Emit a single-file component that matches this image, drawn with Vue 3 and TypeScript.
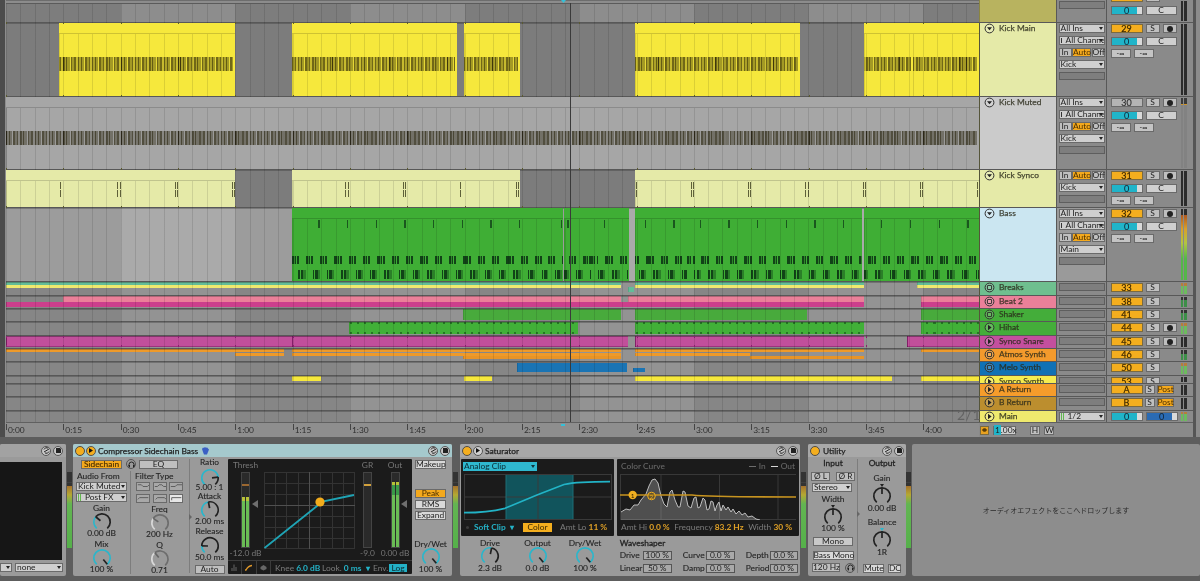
<script setup lang="ts">
import { h } from 'vue'

interface Clip { from: number; to: number; color?: string; y?: number; h?: number; kind?: string; title?: boolean }
interface Track {
  h: number
  name?: string
  color: string
  icon?: 'fold' | 'group' | 'play'
  lane?: string
  clips?: Clip[]
  io?: 'full' | 'short' | 'none' | 'main'
  input?: string
  num?: string
  numOff?: boolean
  rec?: boolean
  mix?: 'full' | 'short' | 'ret' | 'main' | 'top'
  meter?: string
  tall?: boolean
}

const YEL = '#f6e83c'
const PALE = '#e5eaa8'
const GRN = '#3fae35'
const MUT = '#a6a6a6'
const TEAL = '#63bd98'
const LEMON = '#efe96e'
const PINK = '#ea8099'
const MAG = '#cc3f8c'
const SHK = '#48aa3c'
const SNR = '#c14f9b'
const ORG = '#ee9a2a'
const BLU = '#1a74b4'

const strips = (ranges: number[][], color: string, y: number, hh: number, kind?: string): Clip[] =>
  ranges.map(([from, to]) => ({ from, to, color, y, h: hh, kind }))

const tracks: Track[] = [
  { h: 22, color: '#b8b35f', mix: 'top', meter: 'dark', io: 'none' },
  {
    h: 74, name: 'Kick Main', color: PALE, icon: 'fold', lane: 'dim', io: 'full', input: 'Kick', num: '29', rec: true, mix: 'full', meter: 'dark',
    clips: [[59, 235], [292, 457], [464, 520], [635, 799.5], [864, 913], [913, 979]].map(([from, to]) => ({ from, to, color: YEL, kind: 'kick', title: true })),
  },
  {
    h: 73, name: 'Kick Muted', color: '#cbcbcb', icon: 'fold', lane: 'dim', io: 'full', input: 'Kick', num: '30', numOff: true, rec: true, mix: 'full', meter: 'muted',
    clips: [{ from: 6, to: 979, color: MUT, kind: 'kickm', title: true }],
  },
  {
    h: 38, name: 'Kick Synco', color: PALE, icon: 'fold', lane: 'dim', io: 'short', input: 'Kick', num: '31', rec: true, mix: 'full', meter: 'dark',
    clips: [[6, 235], [292, 520], [635, 979]].map(([from, to]) => ({ from, to, color: PALE, kind: 'synco', title: true })),
  },
  {
    h: 74, name: 'Bass', color: '#cbe6f1', icon: 'fold', lane: 'light', io: 'full', input: 'Main', num: '32', rec: true, mix: 'full', meter: 'hot', tall: true,
    clips: [[292, 563], [564, 629], [635, 862], [864, 979]].map(([from, to]) => ({ from, to, color: GRN, kind: 'bass', title: true })),
  },
  {
    h: 14, name: 'Breaks', color: '#6fbf8f', icon: 'group', num: '33', io: 'none', mix: 'short', meter: 'mini',
    clips: [...strips([[6, 621], [635, 864], [917, 979]], TEAL, 1, 4), ...strips([[6, 621], [635, 864], [917, 979]], LEMON, 4, 3), ...strips([[628, 634]], TEAL, 6, 5)],
  },
  {
    h: 13, name: 'Beat 2', color: PINK, icon: 'group', num: '38', io: 'none', mix: 'short', meter: 'minidark',
    clips: [...strips([[63, 621], [628, 864], [921, 979]], PINK, 1, 6), ...strips([[6, 864], [921, 979]], MAG, 7, 5)],
  },
  {
    h: 13, name: 'Shaker', color: '#44ad3a', icon: 'group', num: '41', io: 'none', mix: 'short', meter: 'minidark',
    clips: strips([[463, 621], [635, 807], [921, 979]], SHK, 1, 11),
  },
  {
    h: 14, name: 'Hihat', color: '#44ad3a', icon: 'play', num: '44', io: 'none', rec: true, mix: 'short', meter: 'mini',
    clips: strips([[349, 578], [635, 864], [921, 979]], '#41b038', 1, 12, 'hihat'),
  },
  {
    h: 13, name: 'Synco Snare', color: '#c44f9e', icon: 'play', num: '45', io: 'none', rec: true, mix: 'short', meter: 'dark',
    clips: strips([[6, 292], [292, 628], [635, 864], [907, 979]], SNR, 1, 11, 'edge'),
  },
  {
    h: 13, name: 'Atmos Synth', color: '#f39a2c', icon: 'group', num: '46', io: 'none', mix: 'short', meter: 'minidark',
    clips: [
      ...strips([[6, 284], [292, 621], [635, 864], [921, 979]], ORG, 1, 3),
      ...strips([[235, 284], [292, 621], [635, 750]], ORG, 5, 3),
      ...strips([[463, 621], [750, 864]], '#e89426', 8, 3),
    ],
  },
  {
    h: 14, name: 'Melo Synth', color: '#1071b5', icon: 'group', num: '50', io: 'none', mix: 'short', meter: 'mini',
    clips: [...strips([[517, 627]], BLU, 2, 5), ...strips([[517, 627], [633, 645]], BLU, 7, 4)],
  },
  {
    h: 8, name: 'Synco Synth', color: '#f5ec50', icon: 'play', num: '53', io: 'none', mix: 'short', meter: 'dark',
    clips: strips([[292, 321], [464, 492], [635, 892], [921, 979]], YEL, 1, 5),
  },
  { h: 13, name: 'A Return', color: '#f59c2b', icon: 'play', num: 'A', io: 'none', mix: 'ret', meter: 'dark' },
  { h: 14, name: 'B Return', color: '#bc8e2e', icon: 'play', num: 'B', io: 'none', mix: 'ret', meter: 'dark' },
  { h: 12, name: 'Main', color: LEMON, icon: 'play', io: 'main', mix: 'main', meter: 'mini' },
]

const noteLanes: Record<string, string[]> = {
  kick: ['n-kick n-a', 'n-kick n-b'],
  kickm: ['n-kick n-a', 'n-kick n-b'],
  synco: ['n-syn n-a', 'n-syn n-b'],
  bass: ['n-bass n-a', 'n-bass n-b', 'n-bass n-c'],
  hihat: ['n-hat n-a', 'n-hat n-b'],
}

const clipStyle = (c: Clip) => ({
  left: `${c.from - 6}px`,
  width: `${c.to - c.from}px`,
  top: c.y !== undefined ? `${c.y - 1}px` : '0',
  height: c.h !== undefined ? `${c.h}px` : '100%',
  background: c.color,
  '--ox': `${6 - c.from}px`,
})

const times = ['0:00', '0:15', '0:30', '0:45', '1:00', '1:15', '1:30', '1:45', '2:00', '2:15', '2:30', '2:45', '3:00', '3:15', '3:30', '3:45', '4:00']

// angle 0 is straight up, clockwise
const pt = (c: number, r: number, a: number) => {
  const t = (a * Math.PI) / 180
  return `${(c + r * Math.sin(t)).toFixed(2)} ${(c - r * Math.cos(t)).toFixed(2)}`
}
const arc = (c: number, r: number, a0: number, a1: number) =>
  `M${pt(c, r, a0)}A${r} ${r} 0 ${a1 - a0 > 180 ? 1 : 0} 1 ${pt(c, r, a1)}`

const Knob = (props: { v: number; mode?: string }) => {
  const c = 10
  const r = 8.2
  const a = -140 + props.v * 280
  const mode = props.mode ?? 'cyan'
  const on = mode === 'white' ? '#d8d8d8' : '#2ab6cb'
  const off = mode === 'white' ? '#6d6d6d' : '#222'
  const parts = []
  if (mode !== 'uni') {
    if (props.v > 0) parts.push(h('path', { d: arc(c, r, -140, a), stroke: on, 'stroke-width': 1.7, fill: 'none' }))
    if (props.v < 1) parts.push(h('path', { d: arc(c, r, a, 140), stroke: off, 'stroke-width': 1.7, fill: 'none' }))
  } else {
    parts.push(h('path', { d: arc(c, r, -140, 140), stroke: '#222', 'stroke-width': 1.7, fill: 'none' }))
  }
  parts.push(h('path', { d: `M${pt(c, 2, a)}L${pt(c, r, a)}`, stroke: mode === 'white' ? '#666' : '#222', 'stroke-width': 1.7 }))
  return h('svg', { class: 'knob', width: 20, height: 20, viewBox: '0 0 20 20' }, parts)
}
Knob.props = ['v', 'mode']

const filterIcons = ['M1 2H5L7 4H12L14 2', 'M1 4H4L6 2H9L11 4H14', 'M1 4H6L8 2H14', 'M1 5L3 3H13', 'M2 5L4 3H12L14 5', 'M2 6V3H13']

const spectrum =
  'M1 38 L6 35 L10 36 L14 31 L18 31 L21 26 L26 20 L29 12 L32 6 L35 5 L38 9 L41 22 L44 30 L47 33 L50 18 L52 16 L55 26 L58 33 L60 33 L63 17 L65 18 L68 32 L71 34 L74 24 L76 23 L78 34 L80 33 L83 24 L85 26 L87 36 L89 35 L91 27 L93 28 L95 37 L97 31 L99 28 L101 37 L103 31 L106 36 L108 33 L111 38 L113 35 L116 40 L119 37 L122 41 L125 39 L128 43 L132 42 L136 45 L140 46'
</script>

<template>
  <div class="live">
    <section class="arr">
      <div class="tracks">
        <div v-for="(t, i) in tracks" :key="i" class="track" :style="{ height: t.h + 'px' }">
          <div class="lane" :class="`lane--${t.lane ?? 'bands'}`">
            <div v-for="(c, j) in t.clips" :key="j" class="clip" :class="c.kind" :style="clipStyle(c)">
              <div v-if="c.title" class="clip__title" :style="{ background: c.color }"></div>
              <i v-for="n in noteLanes[c.kind ?? ''] ?? []" :key="n" :class="n"></i>
            </div>
          </div>
          <div class="head">
            <div class="name" :style="{ background: t.color }">
              <svg v-if="t.icon" class="ticon" width="11" height="11" viewBox="0 0 11 11">
                <circle cx="5.5" cy="5.5" r="4.4" fill="rgba(255,255,255,.18)" stroke="#2f2f2f" stroke-width="1" />
                <path v-if="t.icon === 'fold'" d="M3 4.2H8L5.5 7.2Z" fill="#222" />
                <path v-else-if="t.icon === 'play'" d="M4 2.8L7.6 5.5L4 8.2Z" fill="#222" />
                <rect v-else x="3.4" y="3.4" width="4.2" height="4.2" rx=".6" fill="none" stroke="#2f2f2f" />
              </svg>
              <span v-if="t.name" class="name__txt">{{ t.name }}</span>
            </div>

            <div class="io" :class="{ 'io--tall': t.tall }">
              <template v-if="t.io === 'full'">
                <div class="dd">All Ins</div>
                <div class="dd dd--ch">All Channels</div>
              </template>
              <div v-if="t.io === 'full' || t.io === 'short'" class="iab">
                <span class="b">In</span><span class="b b--on">Auto</span><span class="b">Off</span>
              </div>
              <div v-if="t.io === 'full' || t.io === 'short'" class="dd">{{ t.input }}</div>
              <div v-if="t.io !== 'main'" class="blank"></div>
              <div v-else class="dd dd--main"><em></em>1/2</div>
            </div>

            <div class="mix" :class="{ 'io--tall': t.tall }">
              <div class="mix__col">
                <template v-if="t.mix === 'top'">
                  <div class="mrow mrow--cut"><span class="num"></span><span class="b s"></span></div>
                  <div class="mrow"><span class="vol">0</span><span class="pan">C</span></div>
                </template>
                <template v-else-if="t.mix === 'main'">
                  <div class="mrow"><span class="vol">0</span><span class="vol vol--blue">0</span></div>
                </template>
                <template v-else>
                  <div class="mrow">
                    <span class="num" :class="{ 'num--off': t.numOff }">{{ t.num }}</span>
                    <span class="b s" :class="{ 's--ret': t.mix === 'ret' }">S</span>
                    <span v-if="t.mix === 'ret'" class="b b--on post">Post</span>
                    <span v-else-if="t.rec" class="b s rec"><u></u></span>
                  </div>
                  <template v-if="t.mix === 'full'">
                    <div class="mrow"><span class="vol">0</span><span class="pan">C</span></div>
                    <div class="mrow mrow--inf"><span class="b inf">-∞</span><span class="b inf">-∞</span></div>
                  </template>
                </template>
              </div>
              <div class="meter" :class="`meter--${t.meter}`"><b></b><b></b></div>
            </div>
          </div>
        </div>
      </div>

      <div class="ruler">
        <div class="ruler__time">
          <span v-for="m in times" :key="m" class="tick">{{ m }}</span>
        </div>
        <div class="ruler__head">
          <span class="gear"><svg width="8" height="8" viewBox="0 0 8 8"><path d="M1 4L3 2H5L7 4L5 6H3Z" fill="#5b3c05" /></svg></span>
          <span class="speed"><b>1</b>.00x</span>
          <span class="b hw">H</span><span class="b hw">W</span>
        </div>
      </div>

      <div class="gridlines"></div>
      <div class="barticks"></div>
      <div class="playhead"></div>
      <i class="loc loc--top"></i>
      <i class="loc loc--ruler"></i>
      <span class="sig">2/1</span>
    </section>

    <section class="rack">
      <div class="dev dev--cut">
        <div class="dev__bar dev__bar--end">
          <span class="round"><svg width="7" height="7" viewBox="0 0 7 7"><path d="M1 5L6 2M1 2.5A3 3 0 0 1 5 1M6 4.5A3 3 0 0 1 2 6" stroke="#222" fill="none" /></svg></span>
          <span class="round"><svg width="7" height="7" viewBox="0 0 7 7"><path d="M1 1H5L6 2V6H1Z" fill="#222" /></svg></span>
        </div>
        <div class="cut__screen"></div>
        <div class="cut__row"><span class="dd dd--stub"></span><span class="dd dd--none">none</span></div>
      </div>
      <div class="slot"><div class="rmeter"></div></div>

      <div class="dev dev--comp">
        <div class="dev__bar dev__bar--cyan">
          <span class="power"></span>
          <span class="round round--y"><svg width="7" height="7" viewBox="0 0 7 7"><path d="M2 1L6 3.5L2 6Z" fill="#111" /></svg></span>
          <span class="dev__title">Compressor Sidechain Bass</span>
          <svg class="hand" width="9" height="9" viewBox="0 0 9 9"><path d="M1 3L2 1.5L3 2L4 .8L5 2L6 1.2L7 2.5L8 3.5L7 6L6 8.5H3L2 6Z" fill="#3a5fc4" /></svg>
          <span class="dev__spacer"></span>
          <span class="round"><svg width="7" height="7" viewBox="0 0 7 7"><path d="M1 5L6 2M1 2.5A3 3 0 0 1 5 1M6 4.5A3 3 0 0 1 2 6" stroke="#222" fill="none" /></svg></span>
          <span class="round"><svg width="7" height="7" viewBox="0 0 7 7"><path d="M1 1H5L6 2V6H1Z" fill="#222" /></svg></span>
        </div>
        <div class="comp">
          <div class="sc">
            <div class="sc__top">
              <span class="b b--on sc__btn">Sidechain</span>
              <span class="round round--head"><svg width="7" height="7" viewBox="0 0 7 7"><path d="M1 5V3.5A2.5 2.5 0 0 1 6 3.5V5" stroke="#222" fill="none" /><rect x=".6" y="4" width="1.4" height="2.4" fill="#222" /><rect x="5" y="4" width="1.4" height="2.4" fill="#222" /></svg></span>
              <span class="b sc__eq">EQ</span>
            </div>
            <div class="sc__cols">
              <div class="col col--audio">
                <span class="lbl lbl--start">Audio From</span>
                <div class="dd dd--dev">Kick Muted</div>
                <div class="dd dd--dev dd--main"><em></em>Post FX</div>
                <span class="lbl lbl--knob">Gain</span>
                <Knob :v="0.32" />
                <span class="val">0.00 dB</span>
                <span class="lbl lbl--knob">Mix</span>
                <Knob :v="1" />
                <span class="val">100 %</span>
              </div>
              <div class="col col--filter">
                <span class="lbl lbl--start">Filter Type</span>
                <div class="filters">
                  <span v-for="(d, k) in filterIcons" :key="k" class="fbtn" :class="{ 'fbtn--on': k === 5 }">
                    <svg width="15" height="7" viewBox="0 0 15 8"><path :d="d" stroke="#555" fill="none" /></svg>
                  </span>
                </div>
                <span class="lbl lbl--knob">Freq</span>
                <Knob :v="0.3" mode="white" />
                <span class="val">200 Hz</span>
                <span class="lbl lbl--knob">Q</span>
                <Knob :v="0.36" mode="white" />
                <span class="val">0.71</span>
              </div>
            </div>
          </div>
          <div class="divider"><i></i></div>
          <div class="col col--env">
            <span class="lbl">Ratio</span>
            <Knob :v="0.8" />
            <span class="val">5.00 : 1</span>
            <span class="lbl">Attack</span>
            <Knob :v="0.46" />
            <span class="val">2.00 ms</span>
            <span class="lbl">Release</span>
            <Knob :v="0.18" />
            <span class="val">50.0 ms</span>
            <span class="b env__auto">Auto</span>
          </div>
          <div class="graph">
            <div class="graph__main">
              <div class="gcol gcol--thresh">
                <span class="glbl">Thresh</span>
                <div class="gmeter"><b class="bar"></b><b class="bar"></b><u class="peak"></u></div>
                <span class="glbl glbl--v">-12.0 dB</span>
                <i class="garrow"></i>
              </div>
              <svg class="gplot" width="91" height="77" viewBox="0 0 91 77">
                <path d="M0 .5H91M0 11.5H91M0 22.5H91M0 33.5H91M0 44.5H91M0 55.5H91M0 66.5H91M0 76.5H91M.5 0V77M11.5 0V77M22.5 0V77M34.5 0V77M45.5 0V77M56.5 0V77M68.5 0V77M79.5 0V77M90.5 0V77" stroke="#333" />
                <path d="M45.5 0V77M0 33.5H91" stroke="#505050" />
                <path d="M.5 76L53 34L56 30L90 23" stroke="#1fa3b4" stroke-width="1.8" fill="none" />
                <circle cx="56" cy="30" r="4.6" fill="#f2ac1c" />
              </svg>
              <div class="gcol gcol--gr">
                <span class="glbl">GR</span>
                <div class="gmeter"><u class="peak peak--gr"></u></div>
                <span class="glbl glbl--v">-9.0</span>
              </div>
              <div class="gcol gcol--out">
                <span class="glbl">Out</span>
                <div class="gmeter gmeter--out"><b class="bar"></b><b class="bar"></b></div>
                <span class="glbl glbl--v">0.00 dB</span>
                <i class="garrow garrow--out"></i>
              </div>
            </div>
            <div class="graph__foot">
              <span class="gcell"><svg width="7" height="7" viewBox="0 0 7 7"><path d="M3 .5V7M1 7V4M5 7V3" stroke="#666" /></svg></span>
              <span class="gcell"><svg width="7" height="7" viewBox="0 0 7 7"><path d="M0 6H1Q3 2 7 1.5" stroke="#e0982a" fill="none" stroke-width="1.3" /></svg></span>
              <span class="gcell"><svg width="7" height="7" viewBox="0 0 7 7"><path d="M.5 3L3.5 1L6.5 3V5L3.5 6.5L.5 5Z" fill="#666" /></svg></span>
              <span class="ft ft--knee">Knee <b>6.0 dB</b></span>
              <span class="ft ft--look">Look. <b>0 ms</b> <b class="ft__tri">▾</b></span>
              <span class="ft ft--env">Env.</span>
              <span class="logbtn">Log</span>
            </div>
          </div>
          <div class="col col--mk">
            <span class="b b--lit mk__up">Makeup</span>
            <span class="b b--on mk__b mk__peak">Peak</span>
            <span class="b b--lit mk__b">RMS</span>
            <span class="b b--lit mk__b">Expand</span>
            <span class="lbl mk__dw">Dry/Wet</span>
            <Knob :v="1" />
            <span class="val">100 %</span>
          </div>
        </div>
      </div>
      <div class="slot slot--comp"><div class="rmeter"></div></div>

      <div class="dev dev--sat">
        <div class="dev__bar">
          <span class="power"></span>
          <span class="round round--l"><svg width="7" height="7" viewBox="0 0 7 7"><path d="M2 1L6 3.5L2 6Z" fill="#111" /></svg></span>
          <span class="dev__title">Saturator</span>
          <span class="dev__spacer"></span>
          <span class="round"><svg width="7" height="7" viewBox="0 0 7 7"><path d="M1 5L6 2M1 2.5A3 3 0 0 1 5 1M6 4.5A3 3 0 0 1 2 6" stroke="#222" fill="none" /></svg></span>
          <span class="round"><svg width="7" height="7" viewBox="0 0 7 7"><path d="M1 1H5L6 2V6H1Z" fill="#222" /></svg></span>
        </div>
        <div class="sat__top">
          <div class="scr scr--clip">
            <div class="analog">Analog Clip</div>
            <svg class="plot" width="148" height="46" viewBox="0 0 148 46">
              <rect x="42" width="67" height="46" fill="#11545c" />
              <path d="M0 23H148M74 0V46" stroke="#3a3a3a" />
              <path d="M42 0V46M109 0V46" stroke="#1f6e76" />
              <rect x=".5" y=".5" width="147" height="45" fill="none" stroke="#3a3a3a" />
              <path d="M0 38.7C18 38.7 30 37 41 34.3L73 21L100 10.5C112 8 128 7.7 146 7.7" stroke="#22b3c6" stroke-width="1.7" fill="none" />
            </svg>
            <div class="scr__foot">
              <i class="led"></i>
              <span class="ft ft--cy"><b>Soft Clip</b> <b class="ft__tri">▾</b></span>
              <span class="colorbtn">Color</span>
              <span class="ft">Amt Lo <b class="gold">11 %</b></span>
            </div>
          </div>
          <div class="scr scr--curve">
            <div class="curve__head">
              <span class="ft">Color Curve</span>
              <span class="dev__spacer"></span>
              <span class="ft"><s class="dash"></s>In</span>
              <span class="ft ft--out"><s class="dash dash--w"></s>Out</span>
            </div>
            <svg class="plot" width="176" height="46" viewBox="0 0 176 46">
              <path d="M0 .5H176M0 45.5H176M.5 0V46M41 0V46M99.5 0V46M158 0V46" stroke="#383838" />
              <path :d="spectrum + ' L1 46Z'" fill="rgba(190,190,190,.32)" />
              <path :d="spectrum" stroke="#bdbdbd" stroke-width="1" fill="none" />
              <path d="M0 21H72Q90 23 176 23" stroke="#c79420" stroke-width="1.7" fill="none" />
              <circle cx="12.7" cy="21" r="4.2" fill="#efae20" />
              <text x="12.7" y="23.5" class="pin">1</text>
              <circle cx="31.5" cy="22" r="3.8" fill="rgba(120,90,20,.5)" stroke="#efae20" />
              <text x="31.5" y="24.5" class="pin pin--y">2</text>
            </svg>
            <div class="scr__foot scr__foot--curve">
              <span class="ft">Amt Hi <b class="gold">0.0 %</b></span>
              <span class="ft">Frequency <b class="gold">83.2 Hz</b></span>
              <span class="ft">Width <b class="gold">30 %</b></span>
            </div>
          </div>
        </div>
        <div class="sat__low">
          <div class="col col--k"><span class="lbl">Drive</span><Knob :v="0.54" /><span class="val">2.3 dB</span></div>
          <div class="col col--k"><span class="lbl">Output</span><Knob :v="1" /><span class="val">0.0 dB</span></div>
          <div class="col col--k"><span class="lbl">Dry/Wet</span><Knob :v="1" /><span class="val">100 %</span></div>
          <div class="wave">
            <span class="lbl wave__t">Waveshaper</span>
            <div class="wave__grid">
              <span class="lbl">Drive</span><span class="field field--a">100 %</span>
              <span class="lbl">Curve</span><span class="field">0.0 %</span>
              <span class="lbl">Depth</span><span class="field">0.0 %</span>
              <span class="lbl">Linear</span><span class="field field--a">50 %</span>
              <span class="lbl">Damp</span><span class="field">0.0 %</span>
              <span class="lbl">Period</span><span class="field">0.0 %</span>
            </div>
          </div>
        </div>
      </div>
      <div class="slot slot--sat"><div class="rmeter"></div></div>

      <div class="dev dev--util">
        <div class="dev__bar">
          <span class="power"></span>
          <span class="dev__title dev__title--u">Utility</span>
          <span class="dev__spacer"></span>
          <span class="round"><svg width="7" height="7" viewBox="0 0 7 7"><path d="M1 5L6 2M1 2.5A3 3 0 0 1 5 1M6 4.5A3 3 0 0 1 2 6" stroke="#222" fill="none" /></svg></span>
          <span class="round"><svg width="7" height="7" viewBox="0 0 7 7"><path d="M1 1H5L6 2V6H1Z" fill="#222" /></svg></span>
        </div>
        <div class="util">
          <div class="col col--in">
            <span class="lbl lbl--b">Input</span>
            <div class="urow"><span class="b u__ph">Ø L</span><span class="b u__ph">Ø R</span></div>
            <div class="dd dd--stereo">Stereo</div>
            <span class="lbl u__w">Width</span>
            <div class="uk"><Knob :v="0.5" mode="uni" /></div>
            <span class="val">100 %</span>
            <span class="b u__mono">Mono</span>
            <span class="b b--lit u__bm">Bass Mono</span>
            <div class="urow u__hz"><span class="b u__120">120 Hz</span><span class="round round--head"><svg width="7" height="7" viewBox="0 0 7 7"><path d="M1 5V3.5A2.5 2.5 0 0 1 6 3.5V5" stroke="#222" fill="none" /><rect x=".6" y="4" width="1.4" height="2.4" fill="#222" /><rect x="5" y="4" width="1.4" height="2.4" fill="#222" /></svg></span></div>
          </div>
          <div class="divider divider--u"><i></i></div>
          <div class="col col--out">
            <span class="lbl lbl--b">Output</span>
            <span class="lbl u__g">Gain</span>
            <div class="uk"><Knob :v="0.5" mode="uni" /></div>
            <span class="val u__v">0.00 dB</span>
            <span class="lbl u__bal">Balance</span>
            <div class="uk uk--c"><Knob :v="0.5" mode="uni" /></div>
            <span class="val u__v">1R</span>
            <div class="urow u__mute"><span class="b b--lit">Mute</span><span class="b b--lit u__dc">DC</span></div>
          </div>
        </div>
      </div>
      <div class="slot slot--util"><div class="rmeter"></div></div>

      <div class="drop">オーディオエフェクトをここへドロップします</div>
    </section>
  </div>
</template>

<style scoped>
.live {
  width: 1200px;
  height: 581px;
  overflow: hidden;
  background: #5d5d5d;
  font-family: Lato, "Noto Sans CJK JP", sans-serif;
  font-size: 8.4px;
  color: #222;
  filter: blur(0.4px);
}

/* Arrangement */
.arr {
  position: relative;
  height: 437px;
  padding-left: 6px;
  width: 1187px;
  background: #8d8d8d;
  box-shadow: inset 5px 0 0 #4c4c4c, 3px 0 0 #555, 7px 0 0 #8b8b8b;
}
.track { display: flex; box-sizing: border-box; border-top: 1px solid #585858; }
.track:first-child { border-top: 0; }
.lane {
  position: relative;
  width: 973px;
  flex-shrink: 0;
  overflow: hidden;
}
.lane--bands { background: repeating-linear-gradient(90deg, #868686 0 114.67px, #939393 114.67px 229.33px); }
.lane--dim { background: #7c7c7c; }
.lane--light { background: repeating-linear-gradient(90deg, #9c9c9c 0 114.67px, #aaaaaa 114.67px 229.33px); }
.track:first-child .lane { background: linear-gradient(#8c8c8c 0 3px, #5b5b5b 3px 4px, transparent 4px), repeating-linear-gradient(90deg, #7d7d7d 0 114.67px, #8d8d8d 114.67px 229.33px); }
.lane::after { content: ''; position: absolute; left: 0; right: 0; top: 0; height: 1px; background: rgba(40,40,40,.3); }

.clip { position: absolute; overflow: hidden; box-shadow: inset 1px 0 0 rgba(0,0,0,.12); }
.clip__title {
  position: absolute;
  left: 0;
  right: 0;
  top: 0;
  height: 10px;
  z-index: 2;
  border-bottom: 1px solid rgba(0,0,0,.16);
}
.edge { box-shadow: inset 1px 0 0 rgba(90,0,70,.6), inset 0 1px 0 rgba(90,0,70,.25), inset 0 -1px 0 rgba(90,0,70,.35); }

.n-kick, .n-syn, .n-bass, .n-hat { position: absolute; left: 0; right: 0; display: block; }
.n-kick {
  height: 6.5px;
  right: 2px;
  background-image:
    repeating-linear-gradient(90deg, rgba(20,15,0,.55) 0 1px, transparent 1px 57.33px),
    repeating-linear-gradient(90deg,
      rgba(30,25,0,.62) 0 1.5px, rgba(30,25,0,.34) 1.5px 3px, rgba(30,25,0,.68) 3px 4px, rgba(30,25,0,.38) 4px 6.4px,
      rgba(30,25,0,.08) 6.4px 7.2px, rgba(30,25,0,.62) 7.2px 9px, rgba(30,25,0,.38) 9px 11px, rgba(30,25,0,.62) 11px 12.5px, rgba(30,25,0,.22) 12.5px 14.33px);
  background-position: var(--ox) 0;
}
.kick .n-a, .kickm .n-a { top: 34px; }
.kick .n-b, .kickm .n-b { top: 41px; }
.n-syn {
  height: 7px;
  background-image: repeating-linear-gradient(90deg, transparent 0 54px, rgba(50,50,20,.75) 54px 55px, transparent 55px 56.5px, rgba(50,50,20,.75) 56.5px 57.33px);
  background-position: var(--ox) 0;
}
.synco .n-a { top: 12px; }
.synco .n-b { top: 20px; }
.n-bass { background-position: var(--ox) 0; }
.bass .n-a {
  top: 12px;
  height: 8px;
  background-image: repeating-linear-gradient(90deg, transparent 0 12.6px, rgba(10,50,20,.7) 12.6px 14px, transparent 14px 28.67px);
}
.bass .n-b {
  top: 48px;
  height: 8px;
  background-image: repeating-linear-gradient(90deg,
    rgba(5,40,15,.8) 0 2.5px, rgba(5,40,15,.3) 2.5px 3.2px, rgba(5,40,15,.8) 3.2px 4.5px, transparent 4.5px 5.5px, rgba(5,40,15,.8) 5.5px 7.5px, transparent 7.5px 14.33px);
}
.bass .n-c {
  top: 62px;
  height: 9px;
  background-image: repeating-linear-gradient(90deg,
    transparent 0 7px, rgba(5,40,15,.8) 7px 8.5px, transparent 8.5px 9.5px, rgba(5,40,15,.8) 9.5px 12px, rgba(5,40,15,.35) 12px 14.33px);
}
.n-hat {
  height: 2px;
  background-image: repeating-linear-gradient(90deg, rgba(10,60,15,.5) 0 2px, transparent 2px 7.17px);
  background-position: var(--ox) 0;
}
.hihat .n-a { top: 0; }
.hihat .n-b { bottom: 0; }

.gridlines, .barticks {
  position: absolute;
  left: 6px;
  width: 973px;
  top: 4px;
  height: 418px;
  pointer-events: none;
}
.gridlines {
  z-index: 1;
  background: repeating-linear-gradient(90deg, rgba(0,0,0,.11) 0 1px, transparent 1px 14.33px);
}
.barticks {
  z-index: 3;
  background:
    repeating-linear-gradient(90deg, #5a5a30 0 1px, transparent 1px 57.33px) 0 18px / 100% 2px no-repeat,
    repeating-linear-gradient(90deg, #5a5a30 0 1px, transparent 1px 57.33px) 0 91px / 100% 2px no-repeat,
    repeating-linear-gradient(90deg, #5a5a30 0 1px, transparent 1px 57.33px) 0 164px / 100% 2px no-repeat,
    repeating-linear-gradient(90deg, #5a5a30 0 1px, transparent 1px 57.33px) 0 202px / 100% 2px no-repeat,
    repeating-linear-gradient(90deg, #8a2070 0 1px, transparent 1px 57.33px) 0 332px / 100% 2px no-repeat,
    repeating-linear-gradient(90deg, #8a2070 0 1px, transparent 1px 57.33px) 0 341px / 100% 2px no-repeat;
}
.playhead {
  position: absolute;
  left: 570px;
  top: 3px;
  width: 1.4px;
  height: 419px;
  background: #3a3a3a;
  z-index: 4;
}
.loc { position: absolute; width: 5px; height: 3px; background: #35c0d8; z-index: 4; display: block; }
.loc--top { left: 561px; top: 0; clip-path: polygon(0 0, 100% 0, 50% 100%); }
.loc--ruler { left: 561px; top: 424px; height: 2px; width: 4px; }
.sig {
  position: absolute;
  left: 957px;
  top: 408px;
  font-size: 14px;
  line-height: 14px;
  color: #636363;
  letter-spacing: .5px;
  z-index: 4;
}

/* Track heads */
.head {
  display: flex;
  flex: 1;
  min-width: 0;
  border-left: 1px solid #55553a;
}
.track:first-child .head { border-left-color: #8a8540; }
.name {
  width: 76px;
  flex-shrink: 0;
  display: flex;
  align-items: flex-start;
  overflow: hidden;
  border-right: 1px solid #585858;
}
.ticon { margin: 0 0 0 4px; flex-shrink: 0; }
.name__txt {
  margin: 0 0 0 4px;
  line-height: 11px;
  font-size: 8.4px;
  color: #2a2a1a;
  white-space: nowrap;
  -webkit-text-stroke: .25px #2a2a1a;
  opacity: .85;
}
.io {
  width: 50px;
  flex-shrink: 0;
  padding: 1px 1.5px 0;
  box-sizing: border-box;
  background: #8a8a8a;
  border-right: 1px solid #585858;
  display: flex;
  flex-direction: column;
  gap: 3px;
  overflow: hidden;
}
.io--tall { background: #9a9a9a; }
.dd {
  height: 9px;
  line-height: 7px;
  background: #cfcfcf;
  border: 1px solid #6a6a6a;
  box-sizing: border-box;
  padding: 0 8px 0 1px;
  position: relative;
  white-space: nowrap;
  overflow: hidden;
  flex-shrink: 0;
  font-size: 8.4px;
}
.dd::after {
  content: '';
  position: absolute;
  right: 1px;
  top: 2px;
  border: 2.5px solid transparent;
  border-top: 3.5px solid #222;
  border-bottom: 0;
}
.dd--ch { padding-left: 6px; }
.dd--ch::before { content: ''; position: absolute; left: 1px; top: 1px; width: 1px; height: 5px; background: #333; }
.dd--main { padding-left: 8px; }
.dd em { position: absolute; left: 1px; top: 0; width: 3.5px; height: 7px; background: repeating-linear-gradient(90deg, #61b84e 0 1.2px, transparent 1.2px 2.2px); }
.iab { display: flex; justify-content: space-between; flex-shrink: 0; }
.iab .b { width: 13px; }
.iab .b--on { width: 19px; }
.b {
  display: inline-block;
  height: 9px;
  line-height: 7px;
  background: #bfbfbf;
  border: 1px solid #6a6a6a;
  box-sizing: border-box;
  text-align: center;
  font-size: 8.4px;
  flex-shrink: 0;
  white-space: nowrap;
}
.b--on { background: #f4a91d; color: #4a2f00; }
.b--lit { background: #d9d9d9; }
.blank {
  height: 8px;
  background: #7e7e7e;
  border: 1px solid #5e5e5e;
  box-sizing: border-box;
  flex-shrink: 0;
}
.mix {
  flex: 1;
  display: flex;
  background: #8a8a8a;
  min-width: 0;
  overflow: hidden;
}
.mix__col {
  width: 74px;
  padding: 1px 0 0 3.5px;
  box-sizing: border-box;
  display: flex;
  flex-direction: column;
  gap: 3.5px;
  flex-shrink: 0;
}
.mrow { display: flex; flex-shrink: 0; height: 9px; }
.mrow--cut { margin-top: -8px; }
.num {
  width: 32px;
  height: 9px;
  line-height: 7px;
  background: #f4ae1e;
  border: 1px solid #7a6a40;
  box-sizing: border-box;
  text-align: center;
  font-size: 9px;
  color: #3c2800;
  flex-shrink: 0;
  -webkit-text-stroke: .2px #3c2800;
}
.num--off { background: #b4b4b4; color: #333; border-color: #6a6a6a; -webkit-text-stroke-color: #333; }
.s { width: 14px; margin-left: 3px; }
.s--ret { width: 10px; margin-left: 2px; }
.post { width: 17px; margin-left: 2px; }
.rec { display: flex; align-items: center; justify-content: center; margin-left: 3px; }
.rec u { width: 6px; height: 6px; border-radius: 50%; background: #222; display: block; }
.vol {
  width: 32px;
  height: 9px;
  line-height: 7px;
  border: 1px solid #6a6a6a;
  box-sizing: border-box;
  text-align: center;
  font-size: 9px;
  color: #123;
  background: linear-gradient(90deg, #20b4c9 0 85%, #d9d9d9 85%);
  flex-shrink: 0;
}
.vol--blue {
  margin-left: 3px;
  background: linear-gradient(90deg, #2a6bb4 0 85%, #d9d9d9 85%);
}
.pan {
  width: 31px;
  height: 9px;
  line-height: 7px;
  margin-left: 3px;
  border: 1px solid #6a6a6a;
  box-sizing: border-box;
  background: #cfcfcf;
  text-align: center;
  flex-shrink: 0;
}
.inf { width: 20px; margin-right: 3px; background: #c4c4c4; font-size: 7px; }
.meter {
  width: 5.5px;
  margin: 1px 0;
  display: flex;
  gap: 1px;
  flex-shrink: 0;
}
.meter b { flex: 1; background: #2b2b2b; }
.meter--muted b { background: linear-gradient(#3a3a3a 0 6px, #d09428 6px 7px, #828282 7px); }
.meter--hot b { background: linear-gradient(#2b2b2b 0 9%, #b05a20 9%, #d8a02c 28%, #b3c442 48%, #55b64a 70%); }
.meter--mini b { background: linear-gradient(#b67d3c 0 25%, #6dbb5e 25%); }
.meter--minidark b { background: linear-gradient(#333 0 35%, #3d8e48 35%); }

/* Ruler */
.ruler { height: 15px; display: flex; }
.ruler__time {
  width: 973px;
  flex-shrink: 0;
  display: flex;
  background: #8e8e8e;
  border-top: 1px solid #606060;
  box-sizing: border-box;
}
.tick {
  width: 57.33px;
  flex-shrink: 0;
  box-sizing: border-box;
  padding-left: 2px;
  line-height: 15px;
  font-size: 8.4px;
  color: #2e2e2e;
  background: linear-gradient(#444, #444) 0 1px / 1px 6px no-repeat;
}
.ruler__head {
  flex: 1;
  display: flex;
  align-items: center;
  padding: 0 0 0 1px;
  background: #8a8a8a;
  border-top: 1px solid #606060;
}
.gear {
  width: 9px;
  height: 9px;
  background: #e8a220;
  border: 1px solid #7a6a40;
  box-sizing: border-box;
  display: flex;
  align-items: center;
  justify-content: center;
}
.speed {
  margin-left: 4px;
  width: 23px;
  height: 9px;
  line-height: 7px;
  background: #cfcfcf;
  border: 1px solid #6a6a6a;
  box-sizing: border-box;
  font-size: 8.4px;
}
.speed b { font-weight: 400; background: #20b4c9; padding: 0 1px; }
.hw { width: 10px; margin-left: 4px; }
.speed + .hw { margin-left: 14px; }

/* Device rack */
.rack {
  display: flex;
  height: 132px;
  margin-top: 7px;
}
.dev {
  background: #9a9a9a;
  border-radius: 2px;
  flex-shrink: 0;
  height: 132px;
  overflow: hidden;
  box-sizing: border-box;
}
.dev--cut { width: 66px; }
.dev--comp { width: 379px; }
.dev--sat { width: 340px; }
.dev--util { width: 98px; }
.slot { width: 7px; flex-shrink: 0; padding: 28px 0 0 1px; box-sizing: border-box; }
.slot--comp { width: 8px; }
.slot--sat { width: 8px; }
.slot--util { width: 6px; padding-left: 0; }
.rmeter {
  width: 5px;
  height: 76px;
  background: linear-gradient(#333 0 13%, #3f3f3f 13% 14%, #333 14% 18%, #a5702d 18%, #b5a833 30%, #63b552 42%, #55b04a);
}
.dev__bar {
  height: 13px;
  display: flex;
  align-items: center;
  padding: 0 2px;
  background: #a8a8a8;
}
.dev__bar--cyan { background: #a5c9cd; }
.dev__bar--end { justify-content: flex-end; padding-right: 3px; }
.dev__title {
  font-size: 8.4px;
  margin-left: 2.5px;
  white-space: nowrap;
  -webkit-text-stroke: .25px #222;
}
.dev__title--u { margin-left: 3px; }
.dev__spacer { flex: 1; }
.power {
  width: 10px;
  height: 10px;
  border-radius: 50%;
  background: #f4ae1e;
  border: 1px solid #4a4a4a;
  box-sizing: border-box;
  flex-shrink: 0;
}
.round {
  width: 10px;
  height: 10px;
  border-radius: 50%;
  background: #c8c8c8;
  border: 1px solid #555;
  box-sizing: border-box;
  display: inline-flex;
  align-items: center;
  justify-content: center;
  margin-left: 2px;
  flex-shrink: 0;
}
.round--y { background: #f4ae1e; margin-left: .5px; }
.round--l { background: #cfcfcf; margin-left: .5px; }
.round--head { background: #9a9a9a; }
.hand { margin-left: 3px; }

.col { display: flex; flex-direction: column; align-items: center; flex-shrink: 0; }
.lbl { line-height: 9px; white-space: nowrap; font-size: 8.4px; color: #262626; -webkit-text-stroke: .12px #262626; }
.lbl--b { -webkit-text-stroke: .3px #222; }
.lbl--start { align-self: flex-start; margin-left: 1px; }
.val { line-height: 9px; white-space: nowrap; font-size: 8.4px; color: #262626; margin-top: -3px; -webkit-text-stroke: .12px #262626; }
.knob { display: block; flex-shrink: 0; margin-top: -1px; }

/* Compressor */
.comp { display: flex; height: 119px; padding: 2px 0 0 3px; box-sizing: border-box; }
.sc { width: 112px; flex-shrink: 0; }
.sc__top { display: flex; align-items: center; height: 10px; padding-left: 5px; }
.sc__btn { width: 41px; -webkit-text-stroke: .15px #4a2f00; }
.sc__top .round { margin-left: 4px; }
.sc__eq { width: 39px; margin-left: 3px; }
.sc__cols { display: flex; margin-top: 2px; }
.col--audio { width: 55px; padding-top: 1px; border-right: 1px solid #7d7d7d; height: 103px; box-sizing: border-box; padding-right: 3px; }
.col--audio .dd { width: 100%; margin-top: 1px; }
.col--audio .dd--dev + .dd--dev { margin-top: 1.5px; }
.lbl--knob { margin-top: 2px; }
.col--filter { width: 54px; padding-left: 3px; padding-top: 1px; box-sizing: border-box; }
.filters { display: grid; grid-template-columns: repeat(3, 14px); gap: 2.5px; margin-top: 1px; height: 21px; }
.fbtn { display: block; height: 9px; background: #a8a8a8; border: 1px solid #6a6a6a; box-sizing: border-box; overflow: hidden; }
.fbtn svg { display: block; margin-left: -1px; }
.fbtn--on { background: #e6e6e6; }
.divider { width: 3px; flex-shrink: 0; position: relative; }
.divider::before { content: ''; position: absolute; left: 1px; top: 0; bottom: 3px; width: 1px; background: #7d7d7d; }
.divider i { position: absolute; left: 1px; top: 55px; border: 3px solid transparent; border-left: 3px solid #666; display: block; }

.col--env { width: 37px; margin-top: -1.5px; }
.col--env .lbl { margin-top: 1px; }
.col--env .lbl:first-child { margin-top: 0; }
.col--env .lbl:nth-child(4) { margin-top: -.5px; }
.col--env .knob { margin-top: -.5px; }
.col--env .lbl:first-child + .knob { margin-top: 1.5px; }
.col--env .val { margin-top: -3px; }
.col--env .lbl:first-child + .knob + .val { margin-top: -5px; }
.env__auto { width: 30px; margin-top: 3px; }

.graph {
  width: 184px;
  flex-shrink: 0;
  height: 115px;
  background: #1b1b1b;
  border-radius: 1px;
  display: flex;
  flex-direction: column;
}
.graph__main { flex: 1; display: flex; padding: 0 0 0 3px; }
.gcol { position: relative; display: flex; flex-direction: column; align-items: center; flex-shrink: 0; }
.gcol--thresh { width: 29px; }
.gcol--gr { width: 21px; margin-left: 2px; }
.gcol--out { width: 34px; }
.glbl { font-size: 8.4px; line-height: 13px; color: #777; white-space: nowrap; }
.glbl--v { line-height: 11px; }
.gmeter {
  width: 9px;
  height: 76px;
  background: #2a2a2a;
  border: 1px solid #444;
  box-sizing: border-box;
  position: relative;
  display: flex;
  gap: 1px;
  align-items: flex-end;
}
.bar { flex: 1; height: 68%; display: block; background: linear-gradient(#b8c238 0 7%, #6abd55 7%); }
.gmeter--out .bar { height: 88%; background: linear-gradient(#b8c238 0 5%, #3a9a48 5% 20%, #6abd55 20%); }
.peak { position: absolute; left: 0; right: 0; top: 11px; height: 2px; background: #9b6730; display: block; }
.peak--gr { background: #d1a03c; }
.garrow {
  position: absolute;
  left: 21px;
  top: 41px;
  border: 4px solid transparent;
  border-right: 6px solid #6f6f6f;
  border-left: 0;
  display: block;
}
.garrow--out { left: 23px; }
.gplot { margin: 13px 0 0 4px; flex-shrink: 0; }
.graph__foot {
  height: 14px;
  display: flex;
  align-items: center;
  border-top: 1px solid #3c3c3c;
  box-sizing: border-box;
  flex-shrink: 0;
}
.gcell {
  width: 14.33px;
  height: 100%;
  display: flex;
  align-items: center;
  justify-content: center;
  border-right: 1px solid #3c3c3c;
  flex-shrink: 0;
  box-sizing: border-box;
}
.ft { font-size: 8.4px; color: #7c7c7c; white-space: nowrap; }
.ft b { color: #24b3c8; }
.ft__tri { margin-left: 2px; }
.ft--knee { margin-left: 4px; width: 42px; flex-shrink: 0; }
.ft--look { margin-left: 5px; width: 51px; flex-shrink: 0; }
.ft--env { width: 16px; flex-shrink: 0; }
.logbtn {
  width: 18px;
  height: 8px;
  line-height: 8px;
  background: #23b1c7;
  color: #0d2a30;
  text-align: center;
  font-size: 8.4px;
  flex-shrink: 0;
}
.col--mk { width: 37px; }
.mk__up { width: 31px; margin-top: 1px; }
.mk__b { width: 31px; margin-top: 2px; }
.mk__peak { margin-top: 20px; }
.mk__dw { margin-top: 19.5px; }
.col--mk .knob { margin-top: -1.5px; }
.col--mk .val { margin-top: -2.5px; }

/* Saturator */
.sat__top { display: flex; gap: 3px; padding: 2px 1px 0; }
.scr { background: #1b1b1b; height: 77px; border-radius: 1px; }
.scr--clip { width: 153px; padding: 3px 2px 0 3px; box-sizing: border-box; }
.scr--curve { width: 182px; padding: 3px 3px 0; box-sizing: border-box; }
.analog {
  width: 74px;
  height: 9px;
  line-height: 9px;
  background: #2fb8cf;
  color: #0a2a32;
  font-size: 8.4px;
  padding-left: 1px;
  position: relative;
  box-sizing: border-box;
  margin: 0 0 3px -1px;
}
.analog::after {
  content: '';
  position: absolute;
  right: 2px;
  top: 3px;
  border: 2.5px solid transparent;
  border-top: 3.5px solid #10333b;
  border-bottom: 0;
}
.plot { display: block; }
.scr__foot { display: flex; align-items: center; height: 14px; color: #777; }
.led { width: 3px; height: 3px; border-radius: 50%; background: #3b3b3b; margin: 0 5px 0 2px; display: block; flex-shrink: 0; }
.ft--cy { width: 48px; flex-shrink: 0; }
.colorbtn {
  width: 29px;
  height: 9px;
  line-height: 9px;
  margin-left: 1px;
  background: #f4ae1e;
  color: #3b2800;
  text-align: center;
  font-size: 8.4px;
  flex-shrink: 0;
}
.colorbtn + .ft { margin-left: 8px; }
.ft .gold { color: #e0a126; }
.scr__foot--curve { justify-content: space-between; padding: 0 4px 0 1px; }
.curve__head { display: flex; height: 9px; margin-bottom: 3px; padding: 0 1px; line-height: 9px; }
.curve__head .ft { color: #6d6d6d; }
.ft--out { margin-left: 5px; }
.dash { display: inline-block; width: 7px; height: 1.5px; background: #6d6d6d; margin-right: 3px; vertical-align: 2px; }
.dash--w { background: #d6d6d6; }
.pin { font-size: 6.5px; text-anchor: middle; fill: #2a1c00; }
.pin--y { fill: #efae20; }
.sat__low { display: flex; padding-top: 2.5px; }
.col--k { width: 47.5px; }
.col--k:first-child { margin-left: 6.25px; }
.col--k .knob { margin-top: -1.5px; }
.col--k .val { margin-top: -2.5px; }
.wave { margin-left: 11px; flex: 1; }
.wave__t { display: block; -webkit-text-stroke: .3px #222; }
.wave__grid {
  display: grid;
  grid-template-columns: 23px 29px 34px 29px 35px 28px;
  row-gap: 3.5px;
  margin-top: 3.5px;
  align-items: center;
}
.wave__grid > :nth-child(6n + 3), .wave__grid > :nth-child(6n + 5) { padding-left: 11px; }
.field {
  height: 9px;
  line-height: 7px;
  border: 1px solid #555;
  box-sizing: border-box;
  background: #a9a9a9;
  text-align: center;
  font-size: 8.4px;
}

/* Utility */
.util { display: flex; height: 119px; padding: 2px 0 0 3px; box-sizing: border-box; }
.col--in { width: 44px; }
.col--out { width: 42px; }
.urow { display: flex; justify-content: space-between; width: 100%; align-items: center; }
.u__ph { width: 19px; margin-top: 4px; }
.dd--stereo { width: 40px; margin-top: 1.5px; align-self: flex-start; margin-left: 1px; }
.u__w { margin-top: 3.5px; }
.uk { position: relative; margin-top: 2.5px; }
.uk .knob { margin: 0; }
.uk::before {
  content: '';
  position: absolute;
  left: 7.5px;
  top: -1.5px;
  border: 2.5px solid transparent;
  border-top: 3.5px solid #222;
  border-bottom: 0;
}
.uk--c::before { border-top-color: #2ab6cb; }
.col--in .val { margin-top: -2.5px; }
.u__mono { width: 40px; margin-top: 3.5px; background: #c9c9c9; }
.u__bm { width: 41px; margin-top: 5.5px; }
.u__hz { margin-top: 2.5px; padding-left: 1px; box-sizing: border-box; }
.u__120 { width: 28px; }
.divider--u { margin: 0 2px 0 1px; }
.divider--u i { top: 52px; }
.u__g { margin-top: 6px; }
.col--out .u__v { margin-top: -1.5px; }
.u__bal { margin-top: 5px; }
.u__mute { margin-top: 6.5px; padding: 0 2px; box-sizing: border-box; }
.u__mute .b { width: 21px; }
.u__mute .u__dc { width: 13px; }

.drop {
  flex: 1;
  height: 132px;
  background: #8d8d8d;
  border-radius: 2px;
  display: flex;
  align-items: center;
  justify-content: center;
  font-size: 7px;
  color: #2a2a2a;
}
.dev--cut .dev__bar { background: #a2a2a2; }
.cut__screen { height: 98px; margin: 5px 4px 0 0; background: #161616; }
.cut__row { display: flex; gap: 3px; margin-top: 3px; padding-right: 3px; }
.dd--stub { width: 12px; padding: 0; }
.dd--none { flex: 1; }
</style>

<style>
body { background: #5d5d5d; }
</style>
